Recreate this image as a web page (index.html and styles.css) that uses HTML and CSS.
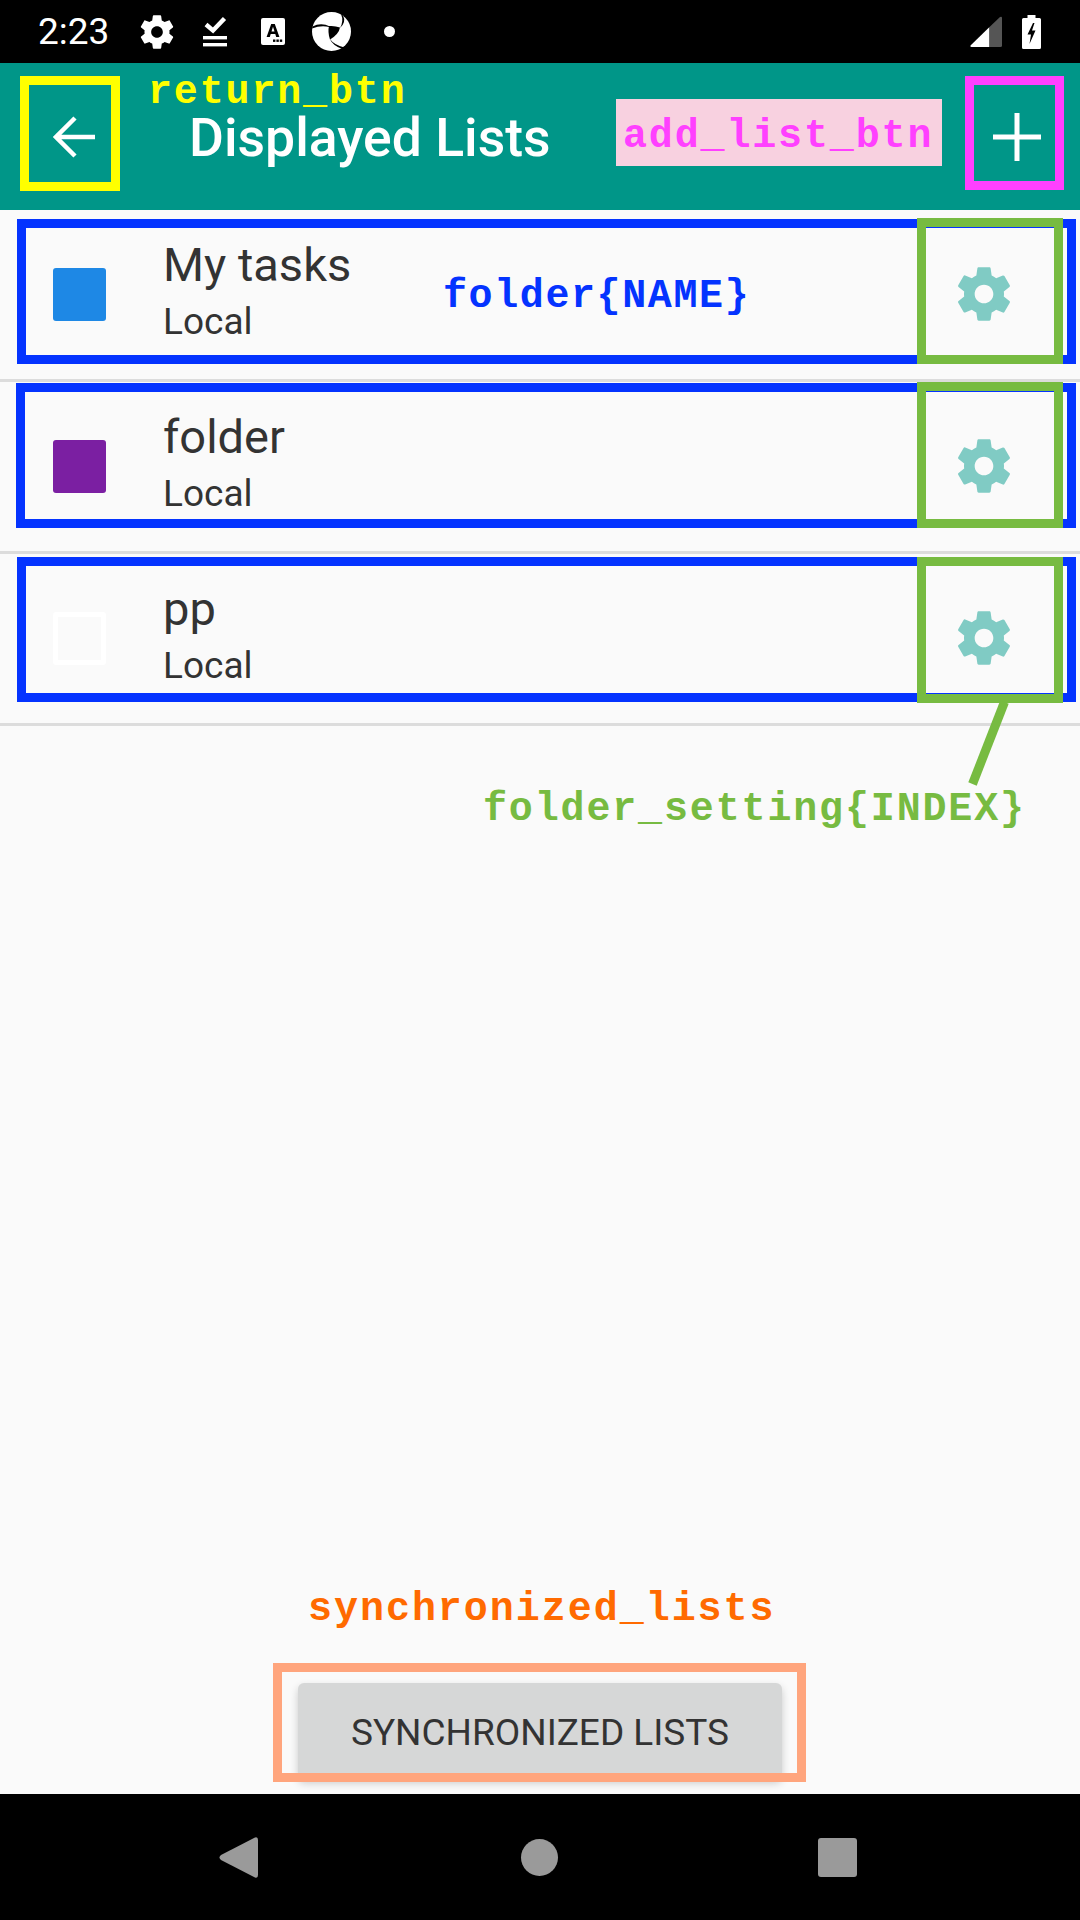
FILE: index.html
```html
<!DOCTYPE html>
<html>

<head>
    <title>Displayed Lists</title>
    <meta charset="UTF-8">
    <meta name="viewport" content="width=device-width, initial-scale=1.0">
    <link rel="stylesheet" href="styles.css">
</head>

<body>
    <svg class="defs" width="0" height="0">
        <symbol id="gear" viewBox="0 0 24 24">
            <path d="M19.43 12.98c.04-.32.07-.64.07-.98s-.03-.66-.07-.98l2.11-1.65c.19-.15.24-.42.12-.64l-2-3.46c-.12-.22-.39-.3-.61-.22l-2.49 1c-.52-.4-1.08-.73-1.69-.98l-.38-2.65C14.46 2.18 14.25 2 14 2h-4c-.25 0-.46.18-.49.42l-.38 2.65c-.61.25-1.17.59-1.69.98l-2.49-1c-.23-.09-.49 0-.61.22l-2 3.46c-.13.22-.07.49.12.64l2.11 1.65c-.04.32-.07.65-.07.98s.03.66.07.98l-2.11 1.65c-.19.15-.24.42-.12.64l2 3.46c.12.22.39.3.61.22l2.49-1c.52.4 1.08.73 1.69.98l.38 2.65c.03.24.24.42.49.42h4c.25 0 .46-.18.49-.42l.38-2.65c.61-.25 1.17-.59 1.69-.98l2.49 1c.23.09.49 0 .61-.22l2-3.46c.12-.22.07-.49-.12-.64l-2.11-1.65zM12 15.5c-1.93 0-3.5-1.57-3.5-3.5s1.57-3.5 3.5-3.5 3.5 1.57 3.5 3.5-1.57 3.5-3.5 3.5z" />
        </symbol>
    </svg>

    <div class="screen">
        <div class="status-bar">
            <span class="clock">2:23</span>
            <svg class="st-gear"><use href="#gear" /></svg>
            <svg class="st-check" viewBox="0 0 24 30">
                <path d="M3 7.5 L10 13.5 L21.5 1.5" fill="none" stroke="#fff" stroke-width="4.4" />
                <rect x="0" y="19" width="24" height="3.4" fill="#fff" />
                <rect x="0" y="26" width="24" height="3.4" fill="#fff" />
            </svg>
            <svg class="st-card" viewBox="0 0 24 27">
                <rect width="24" height="27" rx="2" fill="#fff" />
                <path d="M5.6 19 L10.2 6 H13.8 L18.4 19 H15.2 L14.3 16 H9.7 L8.8 19 Z M10.5 13.4 H13.5 L12 8.8 Z" fill="#000" fill-rule="evenodd" />
                <rect x="12" y="21.5" width="2.4" height="2.4" fill="#000" />
                <rect x="15.4" y="21.5" width="2.4" height="2.4" fill="#000" />
                <rect x="18.8" y="21.5" width="2.4" height="2.4" fill="#000" />
            </svg>
            <svg class="st-logo" viewBox="0 0 39 39">
                <circle cx="19.5" cy="19.5" r="19.5" fill="#fff" />
                <path d="M17 14 Q23 13.5 28 15.5 Q27 22 18 27.5 Q15.5 20 17 14 Z" fill="#000" />
                <path d="M28 16 Q32 9 29 2 L31 3.5 Q34.5 10 28 16 Z" fill="#000" />
                <path d="M18 14.5 Q9 10 0.5 14.5 L0 16.5 Q9 13 17 15 Z" fill="#000" />
                <path d="M17.5 26.5 Q22 33 32.5 35.5 L30.5 37 Q21 34 17.5 26.5 Z" fill="#000" />
            </svg>
            <span class="st-dot"></span>
            <svg class="st-signal" viewBox="0 0 32 31">
                <path d="M19.5 11 L0.5 29.5 Q0 31 1.5 31 H19.5 Z" fill="#fff" />
                <path d="M19.5 11 L30 1 Q32 0 32 2 V29.5 Q32 31 30.5 31 H19.5 Z" fill="#555" />
            </svg>
            <svg class="st-battery" viewBox="0 0 19 34">
                <path d="M5.5 0 H13.5 V3 H17.5 Q19 3 19 4.5 V32.5 Q19 34 17.5 34 H1.5 Q0 34 0 32.5 V4.5 Q0 3 1.5 3 H5.5 Z" fill="#fff" />
                <path d="M11 8 L5.5 19.5 H9 L7.5 29 L13.5 15.5 H10 L12.5 8 Z" fill="#000" />
            </svg>
        </div>

        <div class="app-bar">
            <svg class="back-icon" viewBox="0 0 42 42">
                <path d="M42 21 H4 M22 2 L3 21 L22 40" fill="none" stroke="#fff" stroke-width="4.5" />
            </svg>
            <div class="app-title">Displayed Lists</div>
            <svg class="add-icon" viewBox="0 0 48 48">
                <path d="M24 0 V48 M0 24 H48" fill="none" stroke="#fff" stroke-width="5" />
            </svg>
        </div>

        <div class="folder-row">
            <div class="swatch swatch-blue"></div>
            <div class="folder-text">
                <div class="folder-name">My tasks</div>
                <div class="folder-type">Local</div>
            </div>
            <svg class="row-gear"><use href="#gear" /></svg>
        </div>
        <div class="folder-row">
            <div class="swatch swatch-purple"></div>
            <div class="folder-text">
                <div class="folder-name">folder</div>
                <div class="folder-type">Local</div>
            </div>
            <svg class="row-gear"><use href="#gear" /></svg>
        </div>
        <div class="folder-row">
            <div class="swatch swatch-white"></div>
            <div class="folder-text">
                <div class="folder-name">pp</div>
                <div class="folder-type">Local</div>
            </div>
            <svg class="row-gear"><use href="#gear" /></svg>
        </div>

        <div class="spacer"></div>

        <div class="sync-wrap">
            <div class="sync-button">SYNCHRONIZED LISTS</div>
        </div>

        <div class="nav-bar">
            <svg class="nav-back" viewBox="0 0 39 41">
                <path d="M36 0.5 Q39 -0.5 39 3 V38 Q39 41.5 36 40.5 L2 23 Q-1 20.5 2 18 Z" fill="#9a9a9a" />
            </svg>
            <span class="nav-home"></span>
            <span class="nav-recent"></span>
        </div>

        <!-- annotation overlay -->
        <div class="mark mark-return"></div>
        <div class="mark mark-add"></div>
        <div class="mark mark-folder mark-folder1"></div>
        <div class="mark mark-folder mark-folder2"></div>
        <div class="mark mark-folder mark-folder3"></div>
        <div class="mark mark-setting mark-setting1"></div>
        <div class="mark mark-setting mark-setting2"></div>
        <div class="mark mark-setting mark-setting3"></div>
        <div class="mark mark-sync"></div>
        <svg class="leader" viewBox="0 0 60 90">
            <line x1="44.5" y1="2" x2="12.5" y2="84" stroke="#77bb41" stroke-width="9" />
        </svg>

        <div class="note note-return">return_btn</div>
        <div class="note note-add">add_list_btn</div>
        <div class="note note-folder">folder{NAME}</div>
        <div class="note note-setting">folder_setting{INDEX}</div>
        <div class="note note-sync">synchronized_lists</div>
    </div>
</body>

</html>
```

FILE: styles.css
```css
body {
    margin: 0px;
    padding: 0px;
    overflow: hidden;
}

.defs {
    position: absolute;
}

.screen {
    position: relative;
    display: flex;
    flex-direction: column;
    width: 1080px;
    height: 1920px;
    overflow: hidden;
    background-color: #fafafa;
    font-family: Roboto, sans-serif;
    color: #333333;
}

/* status bar */

.status-bar {
    display: flex;
    align-items: center;
    flex: 0 0 63px;
    padding-left: 38px;
    background-color: #000000;
    color: #ffffff;
    fill: #ffffff;
}

.clock {
    width: 71px;
    font-size: 37px;
    line-height: 63px;
}

.st-gear {
    width: 40px;
    height: 40px;
    margin-left: 28px;
}

.st-check {
    width: 24px;
    height: 30px;
    margin-left: 26px;
}

.st-card {
    width: 24px;
    height: 27px;
    margin-left: 34px;
}

.st-logo {
    width: 39px;
    height: 39px;
    margin-left: 27px;
}

.st-dot {
    width: 11px;
    height: 11px;
    margin-left: 33px;
    border-radius: 50%;
    background-color: #ffffff;
}

.st-signal {
    width: 32px;
    height: 31px;
    margin-left: auto;
}

.st-battery {
    width: 19px;
    height: 34px;
    margin-left: 20px;
    margin-right: 39px;
}

/* app bar */

.app-bar {
    display: flex;
    align-items: center;
    flex: 0 0 147px;
    background-color: #009688;
}

.back-icon {
    width: 42px;
    height: 42px;
    margin-left: 53px;
}

.app-title {
    margin-left: 94px;
    margin-top: 2px;
    font-size: 53.5px;
    font-weight: 500;
    line-height: 44px;
    color: #ffffff;
}

.add-icon {
    width: 48px;
    height: 48px;
    margin-left: auto;
    margin-right: 39px;
}

/* list */

.folder-row {
    display: flex;
    align-items: center;
    flex: 0 0 172px;
    box-sizing: border-box;
    border-bottom: 3px solid #dcdcdc;
}

.swatch {
    width: 53px;
    height: 53px;
    margin-left: 53px;
    margin-bottom: 1px;
    box-sizing: border-box;
    border-radius: 3px;
}

.swatch-blue {
    background-color: #1e88e5;
}

.swatch-purple {
    background-color: #7b1fa2;
}

.swatch-white {
    border: 5px solid #ffffff;
}

.folder-text {
    margin-left: 57px;
    margin-bottom: 4px;
}

.folder-name {
    margin-bottom: 4px;
    font-size: 47px;
    line-height: 54px;
}

.folder-type {
    font-size: 37px;
    line-height: 52px;
}

.row-gear {
    width: 64px;
    height: 64px;
    margin-left: auto;
    margin-right: 64px;
    margin-bottom: 1px;
    fill: #80cbc4;
}

.spacer {
    flex: 1;
}

/* bottom button */

.sync-wrap {
    display: flex;
    justify-content: center;
    padding-bottom: 15px;
}

.sync-button {
    width: 484px;
    height: 96px;
    border-radius: 6px;
    background-color: #d6d7d7;
    box-shadow: 0px 4px 8px rgba(0, 0, 0, 0.2);
    font-size: 37px;
    line-height: 100px;
    text-align: center;
}

/* nav bar */

.nav-bar {
    display: flex;
    align-items: center;
    flex: 0 0 126px;
    padding-left: 219px;
    background-color: #000000;
}

.nav-back {
    width: 39px;
    height: 41px;
}

.nav-home {
    width: 37px;
    height: 37px;
    margin-left: 263px;
    border-radius: 50%;
    background-color: #9a9a9a;
}

.nav-recent {
    width: 39px;
    height: 39px;
    margin-left: 260px;
    border-radius: 3px;
    background-color: #9a9a9a;
}

/* annotation boxes drawn over the screenshot */

.mark {
    position: absolute;
    box-sizing: border-box;
    border: 9px solid;
}

.mark-return {
    left: 20px;
    top: 76px;
    width: 100px;
    height: 115px;
    border-color: #ffff00;
}

.mark-add {
    left: 965px;
    top: 76px;
    width: 99px;
    height: 114px;
    border-color: #ff40ff;
}

.mark-folder {
    width: 1059px;
    height: 145px;
    border-color: #0433ff;
}

.mark-folder1 {
    left: 17px;
    top: 219px;
}

.mark-folder2 {
    left: 16px;
    top: 383px;
    width: 1060px;
}

.mark-folder3 {
    left: 17px;
    top: 557px;
}

.mark-setting {
    left: 917px;
    width: 146px;
    border-color: #77bb41;
}

.mark-setting1 {
    top: 218px;
    height: 146px;
}

.mark-setting2 {
    top: 382px;
    height: 146px;
}

.mark-setting3 {
    top: 557px;
    height: 146px;
}

.mark-sync {
    left: 273px;
    top: 1663px;
    width: 533px;
    height: 119px;
    border-color: #ffa57d;
}

.leader {
    position: absolute;
    left: 960px;
    top: 700px;
    width: 60px;
    height: 90px;
}

.note {
    position: absolute;
    font-family: "Liberation Mono", monospace;
    font-size: 40px;
    font-weight: 700;
    letter-spacing: 1.85px;
    line-height: 44px;
    white-space: nowrap;
}

.note-return {
    left: 148px;
    top: 71px;
    color: #ffff00;
}

.note-add {
    left: 616px;
    top: 99px;
    width: 326px;
    height: 67px;
    box-sizing: border-box;
    padding-left: 7px;
    padding-top: 16px;
    background-color: #f8d1e0;
    color: #ff40ff;
}

.note-folder {
    left: 443px;
    top: 275px;
    letter-spacing: 1.6px;
    color: #0433ff;
}

.note-setting {
    left: 483px;
    top: 788px;
    color: #77bb41;
}

.note-sync {
    left: 308px;
    top: 1588px;
    letter-spacing: 1.97px;
    color: #ff6a00;
}
```
